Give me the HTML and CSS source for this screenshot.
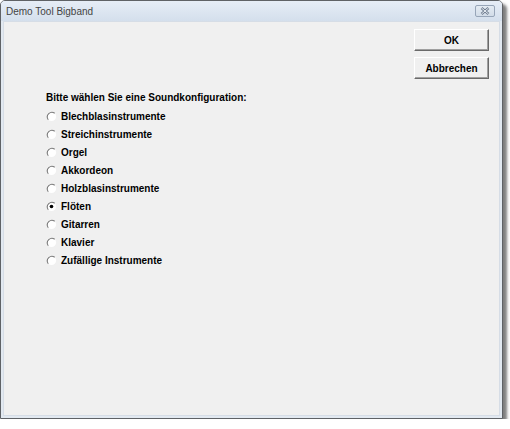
FILE: index.html
```html
<!DOCTYPE html>
<html lang="de">
<head>
    <meta charset="UTF-8">
    <title>Demo Tool Bigband</title>
    <link rel="stylesheet" href="styles.css">
</head>
<body>
    <!-- Fenster -->
    <div class="window">
        <!-- Titelleiste -->
        <div class="titlebar">
            <span class="title">Demo Tool Bigband</span>
            <span class="close">
                <svg width="10" height="8" viewBox="0 0 10 8">
                    <path d="M1.5 1 L8.5 7 M8.5 1 L1.5 7" stroke="#6f7d90" stroke-width="2.6" fill="none"/>
                    <path d="M1.5 1 L8.5 7 M8.5 1 L1.5 7" stroke="#e9eef4" stroke-width="1" fill="none"/>
                </svg>
            </span>
        </div>
        <!-- Inhalt -->
        <div class="content">
            <div class="options">
                <p class="head">Bitte wählen Sie eine Soundkonfiguration:</p>
                <label class="opt"><svg class="radio" viewBox="0 0 12 12"><circle cx="6" cy="6" r="5" fill="#fff"/><path d="M9.5 2.5 A5 5 0 0 0 2.5 9.5" stroke="#7a7a7a" stroke-width="1.2" fill="none"/></svg>Blechblasinstrumente</label>
                <label class="opt"><svg class="radio" viewBox="0 0 12 12"><circle cx="6" cy="6" r="5" fill="#fff"/><path d="M9.5 2.5 A5 5 0 0 0 2.5 9.5" stroke="#7a7a7a" stroke-width="1.2" fill="none"/></svg>Streichinstrumente</label>
                <label class="opt"><svg class="radio" viewBox="0 0 12 12"><circle cx="6" cy="6" r="5" fill="#fff"/><path d="M9.5 2.5 A5 5 0 0 0 2.5 9.5" stroke="#7a7a7a" stroke-width="1.2" fill="none"/></svg>Orgel</label>
                <label class="opt"><svg class="radio" viewBox="0 0 12 12"><circle cx="6" cy="6" r="5" fill="#fff"/><path d="M9.5 2.5 A5 5 0 0 0 2.5 9.5" stroke="#7a7a7a" stroke-width="1.2" fill="none"/></svg>Akkordeon</label>
                <label class="opt"><svg class="radio" viewBox="0 0 12 12"><circle cx="6" cy="6" r="5" fill="#fff"/><path d="M9.5 2.5 A5 5 0 0 0 2.5 9.5" stroke="#7a7a7a" stroke-width="1.2" fill="none"/></svg>Holzblasinstrumente</label>
                <label class="opt"><svg class="radio" viewBox="0 0 12 12"><circle cx="6" cy="6" r="5" fill="#fff"/><path d="M9.5 2.5 A5 5 0 0 0 2.5 9.5" stroke="#7a7a7a" stroke-width="1.2" fill="none"/><circle cx="6" cy="6" r="2" fill="#000"/></svg>Flöten</label>
                <label class="opt"><svg class="radio" viewBox="0 0 12 12"><circle cx="6" cy="6" r="5" fill="#fff"/><path d="M9.5 2.5 A5 5 0 0 0 2.5 9.5" stroke="#7a7a7a" stroke-width="1.2" fill="none"/></svg>Gitarren</label>
                <label class="opt"><svg class="radio" viewBox="0 0 12 12"><circle cx="6" cy="6" r="5" fill="#fff"/><path d="M9.5 2.5 A5 5 0 0 0 2.5 9.5" stroke="#7a7a7a" stroke-width="1.2" fill="none"/></svg>Klavier</label>
                <label class="opt"><svg class="radio" viewBox="0 0 12 12"><circle cx="6" cy="6" r="5" fill="#fff"/><path d="M9.5 2.5 A5 5 0 0 0 2.5 9.5" stroke="#7a7a7a" stroke-width="1.2" fill="none"/></svg>Zufällige Instrumente</label>
            </div>
            <div class="buttons">
                <button class="btn">OK</button>
                <button class="btn">Abbrechen</button>
            </div>
        </div>
    </div>
</body>
</html>
```
FILE: styles.css
```css
body{
    margin: 0;
    background-color: #fff;
    font-family: "Liberation Sans", Arial, sans-serif;
}
.window{
    width: 503px;
    height: 419px;
    box-sizing: border-box;
    border: 1px solid #5f6266;
    border-radius: 5px 5px 0 0;
    background-color: #e2e9f1;
    box-shadow: 4px 4px 3px rgba(0,0,0,0.5);
    display: flex;
    flex-direction: column;
}
.titlebar{
    height: 20px;
    display: flex;
    align-items: center;
    justify-content: space-between;
    padding: 0 7px 0 5px;
    border-radius: 4px 4px 0 0;
    background: linear-gradient(#e6edf6, #d4dfec);
}
.title{
    font-size: 10px;
    color: #444;
}
.close{
    width: 18px;
    height: 10px;
    border: 1px solid #97a5b8;
    border-radius: 2px;
    background: linear-gradient(#e4ebf3, #d2dce8);
    display: flex;
    align-items: center;
    justify-content: center;
    margin-top: -1px;
}
.content{
    flex: 1;
    margin: 0 2px 2px 2px;
    background-color: #f0f0f0;
    border: 1px solid #d6dde6;
    display: flex;
}
.options{
    flex: 1;
    padding-top: 67px;
    padding-left: 42px;
    font-size: 10px;
    font-weight: bold;
    color: #000;
}
.head{
    margin: 0;
    line-height: 18px;
}
.opt{
    display: flex;
    align-items: center;
    height: 18px;
}
.radio{
    width: 11px;
    height: 11px;
    margin-right: 4px;
    flex-shrink: 0;
}
.buttons{
    padding-top: 7px;
    padding-right: 10px;
    display: flex;
    flex-direction: column;
    gap: 6px;
}
.btn{
    width: 75px;
    height: 22px;
    box-sizing: border-box;
    background-color: #f0f0f0;
    border: 1px solid;
    border-color: #fff #6a6a6a #6a6a6a #fff;
    box-shadow: inset -1px -1px 0 #a0a0a0;
    font-family: "Liberation Sans", Arial, sans-serif;
    font-size: 10px;
    font-weight: bold;
    color: #000;
    padding: 0;
}
```
